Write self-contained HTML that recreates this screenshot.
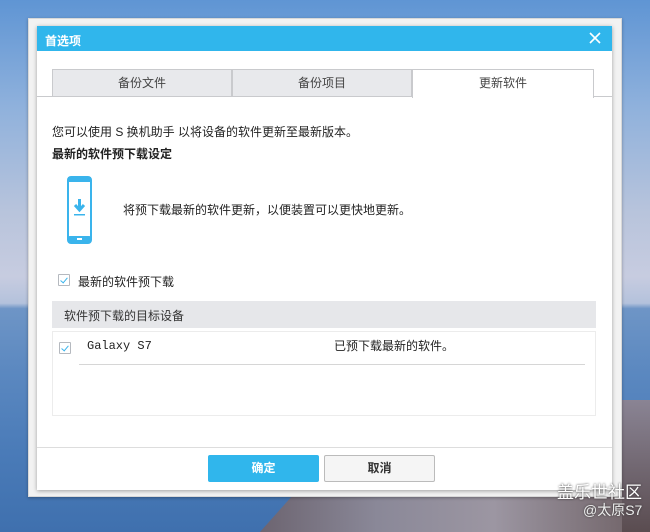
<!DOCTYPE html>
<html><head><meta charset="utf-8"><style>
*{margin:0;padding:0;box-sizing:border-box}
body{width:650px;height:532px;overflow:hidden;position:relative;font-family:"Liberation Sans","Noto Sans CJK SC",sans-serif;font-size:12px;color:#222;
background:linear-gradient(180deg,#5f95d4 0%,#8fb1dc 20%,#b8c4dc 40%,#c7cce0 52%,#b4c2dc 57%,#6e95c6 58%,#5b88c0 70%,#4a7bb8 85%,#3f70ae 100%)}
.pier{position:absolute;left:260px;top:497px;width:390px;height:35px;background:linear-gradient(90deg,#6c6470,#8a8898 30%,#9c96a2 60%,#6d5f63);clip-path:polygon(8% 0,100% 0,100% 100%,0 100%)}
.rail{position:absolute;left:622px;top:400px;width:28px;height:132px;background:linear-gradient(180deg,#8a8494,#5a4c50)}
.outer{position:absolute;left:28px;top:18px;width:594px;height:479px;background:#f2f2f2;border:1px solid #d8d8d8;box-shadow:0 1px 3px rgba(0,0,0,.3)}
.dlg{position:absolute;left:37px;top:26px;width:575px;height:464px;background:#fff;box-shadow:0 1px 4px rgba(0,0,0,.35)}
.title{height:25px;background:#30b6ec;color:#fff;font-size:12px;font-weight:bold;padding:6px 0 0 8px}
.x{position:absolute;right:10px;top:5px;width:14px;height:14px}
.tab{position:absolute;top:43px;height:28px;background:#e8e9ec;border:1px solid #c9cacd;border-bottom:none;text-align:center;line-height:26px;color:#444}
.tab.on{background:#fff}
.tabline{position:absolute;left:0;top:70px;width:575px;height:1px;background:#c9cacd}
.t{position:absolute;white-space:nowrap}
.cb{position:absolute;width:12px;height:12px;border:1px solid #b5b9bf;background:#fff;border-radius:1px}
.cb:after{content:"";position:absolute;left:3px;top:1px;width:3px;height:6px;border:solid #3ab4ec;border-width:0 1.5px 1.5px 0;transform:rotate(40deg)}
.hdr{position:absolute;left:15px;top:275px;width:544px;height:27px;background:#e6e7ea;padding:6px 0 0 12px;color:#333}
.box{position:absolute;left:15px;top:305px;width:544px;height:85px;border:1px solid #ececec}
.foot{position:absolute;left:0;top:421px;width:575px;height:1px;background:#ddd}
.btn{position:absolute;top:429px;width:111px;height:27px;text-align:center;line-height:27px;font-weight:bold;border-radius:2px}
</style></head><body>
<div class="pier"></div><div class="rail"></div>
<div class="outer"></div>
<div class="dlg">
<div class="title">首选项</div>
<svg class="x" viewBox="0 0 14 14"><path d="M2 2L12 12M12 2L2 12" stroke="#fff" stroke-width="1.6"/></svg>
<div class="tab" style="left:15px;width:180px">备份文件</div>
<div class="tab" style="left:195px;width:180px">备份项目</div>
<div class="tabline"></div>
<div class="tab on" style="left:375px;width:182px;height:29px">更新软件</div>
<div class="t" style="left:15px;top:97px">您可以使用 S 换机助手 以将设备的软件更新至最新版本。</div>
<div class="t" style="left:15px;top:119px;font-weight:bold">最新的软件预下载设定</div>
<svg style="position:absolute;left:30px;top:150px" width="25" height="69" viewBox="0 0 25 69"><rect x="1" y="1" width="23" height="66" rx="3" fill="#fff" stroke="#3ab4ec" stroke-width="2"/><rect x="1" y="1" width="23" height="5" fill="#3ab4ec"/><rect x="1" y="60" width="23" height="7" rx="2" fill="#3ab4ec"/><rect x="10" y="62" width="5" height="2" fill="#fff"/><path d="M12.5 23V33M8 29L12.5 34L17 29" stroke="#3ab4ec" stroke-width="3" fill="none"/><rect x="7" y="38" width="11" height="1.5" fill="#3ab4ec"/></svg>
<div class="t" style="left:86px;top:175px">将预下载最新的软件更新，以便装置可以更快地更新。</div>
<div class="cb" style="left:21px;top:248px"></div>
<div class="t" style="left:41px;top:247px">最新的软件预下载</div>
<div class="hdr">软件预下载的目标设备</div>
<div class="box"></div>
<div class="cb" style="left:22px;top:316px"></div>
<div class="t" style="left:50px;top:313px;font-family:'Liberation Mono',monospace;font-size:12px">Galaxy S7</div>
<div class="t" style="left:297px;top:311px">已预下载最新的软件。</div>
<div style="position:absolute;left:42px;top:338px;width:506px;height:1px;background:#d6d6d6"></div>
<div class="foot"></div>
<div class="btn" style="left:171px;background:#30b6ec;color:#fff">确定</div>
<div class="btn" style="left:287px;background:#f5f5f5;border:1px solid #bbb;color:#333;line-height:25px">取消</div>
</div>
<div class="t" style="left:557px;top:478px;color:#fff;font-size:17px;text-shadow:0 0 2px #333">盖乐世社区</div>
<div class="t" style="left:583px;top:500px;color:#eee;font-size:14px;text-shadow:0 0 2px #333">@太原S7</div>
</body></html>
